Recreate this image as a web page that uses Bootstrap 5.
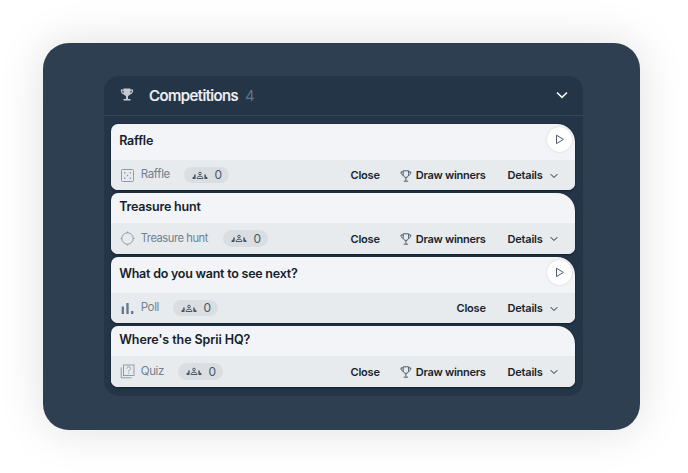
<!DOCTYPE html>
<html lang="en">
<head>
<meta charset="utf-8">
<meta name="viewport" content="width=device-width, initial-scale=1">
<title>Competitions</title>
<link href="https://cdn.jsdelivr.net/npm/bootstrap@5.3.0/dist/css/bootstrap.min.css" rel="stylesheet">
<style>
body{font-family:Inter,"Liberation Sans",sans-serif;background:#fff;height:473px;overflow:hidden;padding:43px 48px 43px 43px;line-height:1}
.stage{height:387px;border-radius:26px;background:#2d3f50;box-shadow:0 0 46px rgba(0,0,0,.13);padding:32.5px 57.5px 0 61px}
.panel{height:320.5px;border-radius:15px;background:#233546}
.panel-head{height:40.5px;border-bottom:1px solid #324658;padding:0 14.5px 0 16px;color:#f1f3f6}
.panel-title{font-size:15px;font-weight:500;letter-spacing:-.53px;margin:1px 7px 0 15px;-webkit-text-stroke:.2px currentColor}
.panel-count{font-size:15px;color:#657482}
.comps{padding:8px 7.5px 0 7.4px;gap:3.4px}
.comp{border-radius:7px 18px 7px 7px;background:#f3f4f8;overflow:hidden;box-shadow:0 1px 2px #14202e,0 0 1px #14202e}
.comp-head{height:30px;padding:0 3px 1.5px 7.8px}
.comp-head.tall{height:36px}
.comp-title{font-size:12.5px;font-weight:600;color:#15222b;letter-spacing:-.2px;white-space:nowrap}
.t-long{letter-spacing:-.24px}.t-quiz{letter-spacing:-.08px}
.comp-foot{height:30.1px;background:#e8ebee;padding:0 17.5px 0 9px}
.kind{font-size:11.5px;color:#71818e;letter-spacing:-.35px;margin-left:5.3px;white-space:nowrap}
.k-raffle{width:29px}.k-hunt{width:68px;font-size:11.2px;letter-spacing:-.46px}.k-poll{width:18px}.k-quiz{width:23px}
.pill{width:45.5px;height:16.5px;border-radius:9px;background:#dadee2;margin-left:14px;padding:0 7px 0 8px;font-size:12px;color:#485763}
.act{font-size:11px;font-weight:600;color:#17242d;letter-spacing:-.2px;white-space:nowrap;padding-top:1px}
.a-close{width:29px}.a-draw{width:86px;margin-left:20px}.a-draw span{letter-spacing:-.28px}.a-details{width:50px;margin-left:22px}
.play{width:25px;height:25px;border-radius:50%;background:#fff;box-shadow:0 0 2px rgba(60,70,90,.25);margin-top:-3px}
svg{display:block;flex:none;fill:none;stroke:currentColor}
.line-icon{color:#8d9caa}
.cup{color:#4c5c6a}
</style>
</head>
<body>
<svg width="0" height="0" class="position-absolute" aria-hidden="true">
  <defs>
    <symbol id="cup" viewBox="0 0 12 12"><path d="M3.200.8h5.400v3.400c0 2-.9 3.200-2.700 3.200S3.200 6.200 3.200 4.200zM3.200 1.900H1c0 2.100.7 3.200 2.500 3.400M8.600 1.900h2.200c0 2.100-.7 3.200-2.500 3.400M5.900 7.400v3.400M3.700 11.200h4.400"/></symbol>
    <symbol id="people" viewBox="0 0 16 9"><circle cx="8" cy="2.500" r="1.300"/><path d="M5.100 7.500c0-1.800 1.100-2.300 2.900-2.300s2.900.5 2.900 2.300z"/><path fill="currentColor" stroke="none" d="M.4 8c0-1.500.6-2.500 1.800-2.600l1.500.1C3.500 6.200 3.500 7 3.500 8zM15.600 8c0-1.500-.6-2.500-1.800-2.600l-1.500.1c.2.700.2 1.500.2 2.500zM2.200 3.400h1.500v2H2.200zM12.300 3.400h1.500v2h-1.500z"/></symbol>
    <symbol id="chev" viewBox="0 0 8 6"><path d="M.7 1.200 4 4.500l3.300-3.300"/></symbol>
    <symbol id="play" viewBox="0 0 10 11"><path d="M1.500 1.200v8.400l6.900-4.200z"/></symbol>
  </defs>
</svg>
<main class="stage">
  <section class="panel">
    <header class="panel-head d-flex align-items-center">
      <svg width="14" height="14" viewBox="0 0 14 14" style="color:#c3cad1"><path fill="currentColor" stroke="none" d="M3.500.5h7v1.100h2.700c0 3-1 4.600-3.200 4.900-.5.800-1.200 1.300-2 1.500v3h2.500v1.600H3.500V11H6V8c-.8-.2-1.500-.7-2-1.500C1.800 6.200.8 4.600.8 1.600h2.700zM2.100 2.700c.1 1.300.6 2 1.500 2.400l-.1-2.400zm8.400 0-.1 2.400c.9-.4 1.400-1.100 1.500-2.400z"/></svg>
      <h1 class="panel-title">Competitions</h1><span class="panel-count">4</span>
      <svg class="ms-auto" width="12" height="8" viewBox="0 0 12 8" stroke-width="1.700"><path d="M1 1.500 6 6.300l5-4.800"/></svg>
    </header>
    <div class="comps d-flex flex-column">
      <article class="comp">
        <div class="comp-head tall d-flex align-items-center justify-content-between"><span class="comp-title">Raffle</span>
          <span class="play d-flex align-items-center justify-content-center"><svg class="cup" width="10" height="11"><use href="#play"/></svg></span></div>
        <div class="comp-foot d-flex align-items-center">
          <svg class="line-icon" width="15" height="15" viewBox="0 0 15 15"><rect x="1.500" y="1.500" width="12" height="12" rx="1"/><path stroke-width="1.400" d="M4 4.700h1.400M9.600 4.700H11M6.800 7.500h1.400M4 10.300h1.400M9.600 10.300H11"/></svg>
          <span class="kind k-raffle">Raffle</span>
          <span class="pill d-flex align-items-center justify-content-between"><svg width="16" height="9"><use href="#people"/></svg>0</span>
          <span class="act a-close ms-auto">Close</span>
          <span class="act a-draw d-flex align-items-center justify-content-between"><svg class="cup" width="12" height="12"><use href="#cup"/></svg><span>Draw winners</span></span>
          <span class="act a-details d-flex align-items-center justify-content-between">Details<svg width="8" height="6"><use href="#chev"/></svg></span>
        </div>
      </article>
      <article class="comp">
        <div class="comp-head d-flex align-items-center"><span class="comp-title">Treasure hunt</span></div>
        <div class="comp-foot d-flex align-items-center">
          <svg class="line-icon" width="15" height="15" viewBox="0 0 15 15"><circle cx="7.500" cy="7.500" r="5.700"/><path d="M7.500 .5v1.500M7.500 13v1.500M.5 7.500H2M13 7.500h1.500"/></svg>
          <span class="kind k-hunt">Treasure hunt</span>
          <span class="pill d-flex align-items-center justify-content-between"><svg width="16" height="9"><use href="#people"/></svg>0</span>
          <span class="act a-close ms-auto">Close</span>
          <span class="act a-draw d-flex align-items-center justify-content-between"><svg class="cup" width="12" height="12"><use href="#cup"/></svg><span>Draw winners</span></span>
          <span class="act a-details d-flex align-items-center justify-content-between">Details<svg width="8" height="6"><use href="#chev"/></svg></span>
        </div>
      </article>
      <article class="comp">
        <div class="comp-head tall d-flex align-items-center justify-content-between"><span class="comp-title t-long">What do you want to see next?</span>
          <span class="play d-flex align-items-center justify-content-center"><svg class="cup" width="10" height="11"><use href="#play"/></svg></span></div>
        <div class="comp-foot d-flex align-items-center">
          <svg width="15" height="15" viewBox="0 0 15 15" style="color:#64778a" stroke-width="2.300"><path d="M2.800 13V5.500M7.500 13V2M12.200 13v-3"/></svg>
          <span class="kind k-poll">Poll</span>
          <span class="pill d-flex align-items-center justify-content-between"><svg width="16" height="9"><use href="#people"/></svg>0</span>
          <span class="act a-close ms-auto">Close</span>
          <span class="act a-details d-flex align-items-center justify-content-between">Details<svg width="8" height="6"><use href="#chev"/></svg></span>
        </div>
      </article>
      <article class="comp">
        <div class="comp-head d-flex align-items-center"><span class="comp-title t-quiz">Where's the Sprii HQ?</span></div>
        <div class="comp-foot d-flex align-items-center">
          <svg class="line-icon" width="15" height="15" viewBox="0 0 15 15"><rect x="3.500" y="1" width="10.500" height="10.500"/><path d="M1.200 3.500v10.300h10.300M6.900 4.600c0-2.500 3.800-2.300 3.600 0-.1 1.300-1.800 1.500-1.800 3M8.700 8.700v1.200"/></svg>
          <span class="kind k-quiz">Quiz</span>
          <span class="pill d-flex align-items-center justify-content-between"><svg width="16" height="9"><use href="#people"/></svg>0</span>
          <span class="act a-close ms-auto">Close</span>
          <span class="act a-draw d-flex align-items-center justify-content-between"><svg class="cup" width="12" height="12"><use href="#cup"/></svg><span>Draw winners</span></span>
          <span class="act a-details d-flex align-items-center justify-content-between">Details<svg width="8" height="6"><use href="#chev"/></svg></span>
        </div>
      </article>
    </div>
  </section>
</main>
<script src="https://cdn.jsdelivr.net/npm/bootstrap@5.3.0/dist/js/bootstrap.bundle.min.js"></script>
</body>
</html>
